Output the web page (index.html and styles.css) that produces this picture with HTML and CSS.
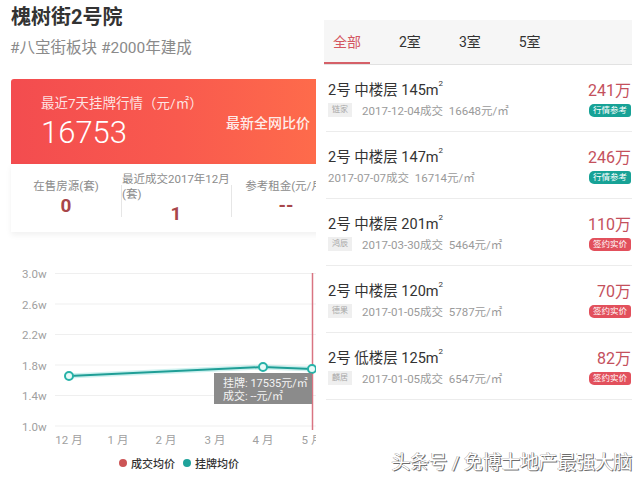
FILE: index.html
```html
<!DOCTYPE html>
<html lang="zh">
<head>
<meta charset="utf-8">
<title>槐树街2号院</title>
<link rel="stylesheet" href="styles.css">
</head>
<body>
<div class="page">
  <section class="left">
    <h1 class="title">槐树街2号院</h1>
    <div class="subtitle">#八宝街板块 #2000年建成</div>
    <div class="hero">
      <div class="hero-main">
        <div class="hero-label">最近7天挂牌行情（元/㎡）</div>
        <div class="hero-value">16753</div>
      </div>
      <div class="hero-link">最新全网比价</div>
    </div>
    <div class="stats">
      <div class="stat">
        <div class="stat-label">在售房源(套)</div>
        <div class="stat-num">0</div>
      </div>
      <div class="stat stat-div">
        <div class="stat-label">最近成交2017年12月(套)</div>
        <div class="stat-num">1</div>
      </div>
      <div class="stat stat-div">
        <div class="stat-label">参考租金(元/月)</div>
        <div class="stat-num">--</div>
      </div>
    </div>
    <svg class="chart" width="305" height="192" viewBox="11 258 305 192">
      <g class="grid">
        <line x1="55" y1="273.5" x2="316" y2="273.5"/>
        <line x1="55" y1="304" x2="316" y2="304"/>
        <line x1="55" y1="334.5" x2="316" y2="334.5"/>
        <line x1="55" y1="365" x2="316" y2="365"/>
        <line x1="55" y1="395.5" x2="316" y2="395.5"/>
        <line x1="55" y1="426" x2="316" y2="426"/>
      </g>
      <g class="ylab">
        <text x="22" y="278">3.0w</text>
        <text x="22" y="308.5">2.6w</text>
        <text x="22" y="339">2.2w</text>
        <text x="22" y="369.5">1.8w</text>
        <text x="22" y="400">1.4w</text>
        <text x="22" y="430.5">1.0w</text>
      </g>
      <g class="xlab">
        <text x="69" y="444">12 月</text>
        <text x="118" y="444">1 月</text>
        <text x="166" y="444">2 月</text>
        <text x="215" y="444">3 月</text>
        <text x="263" y="444">4 月</text>
        <text x="312" y="444">5 月</text>
      </g>
      <line class="cursor" x1="312.5" y1="273" x2="312.5" y2="430"/>
      <polyline class="glow" points="69,376 263,367 312,369"/>
      <polyline class="series" points="69,376 263,367 312,369"/>
      <circle class="pt" cx="69" cy="376" r="4"/>
      <circle class="pt" cx="263" cy="367" r="4"/>
      <circle class="pt" cx="312" cy="369" r="4"/>
      <rect class="tip" x="214" y="373" width="98" height="31"/>
      <text class="tiptext" x="223" y="387">挂牌: 17535元/㎡</text>
      <text class="tiptext" x="223" y="400">成交: --元/㎡</text>
    </svg>
    <div class="legend">
      <span class="dot dot-red"></span><span class="legend-text">成交均价</span>
      <span class="dot dot-teal"></span><span class="legend-text">挂牌均价</span>
    </div>
  </section>

  <section class="right">
    <nav class="tabs">
      <span class="tab active">全部</span>
      <span class="tab">2室</span>
      <span class="tab">3室</span>
      <span class="tab">5室</span>
    </nav>
    <div class="list">
      <div class="row">
        <div class="row-info">
          <div class="row-title">2号 中楼层 145m<sup>2</sup></div>
          <div class="row-meta"><span class="src">链家</span><span>2017-12-04成交&nbsp;&nbsp;16648元/㎡</span></div>
        </div>
        <div class="row-side">
          <div class="price">241万</div>
          <span class="badge badge-teal">行情参考</span>
        </div>
      </div>
      <div class="row">
        <div class="row-info">
          <div class="row-title">2号 中楼层 147m<sup>2</sup></div>
          <div class="row-meta"><span>2017-07-07成交&nbsp;&nbsp;16714元/㎡</span></div>
        </div>
        <div class="row-side">
          <div class="price">246万</div>
          <span class="badge badge-teal">行情参考</span>
        </div>
      </div>
      <div class="row">
        <div class="row-info">
          <div class="row-title">2号 中楼层 201m<sup>2</sup></div>
          <div class="row-meta"><span class="src">鸿辰</span><span>2017-03-30成交&nbsp;&nbsp;5464元/㎡</span></div>
        </div>
        <div class="row-side">
          <div class="price">110万</div>
          <span class="badge badge-red">签约实价</span>
        </div>
      </div>
      <div class="row">
        <div class="row-info">
          <div class="row-title">2号 中楼层 120m<sup>2</sup></div>
          <div class="row-meta"><span class="src">德果</span><span>2017-01-05成交&nbsp;&nbsp;5787元/㎡</span></div>
        </div>
        <div class="row-side">
          <div class="price">70万</div>
          <span class="badge badge-red">签约实价</span>
        </div>
      </div>
      <div class="row">
        <div class="row-info">
          <div class="row-title">2号 低楼层 125m<sup>2</sup></div>
          <div class="row-meta"><span class="src">麟居</span><span>2017-01-05成交&nbsp;&nbsp;6547元/㎡</span></div>
        </div>
        <div class="row-side">
          <div class="price">82万</div>
          <span class="badge badge-red">签约实价</span>
        </div>
      </div>
    </div>
  </section>
  <div class="watermark">头条号 / 免博士地产最强大脑</div>
</div>
</body>
</html>
```

FILE: styles.css
```css
* { box-sizing: border-box; }
html, body {
  margin: 0;
  padding: 0;
  background: #fff;
}
body {
  font-family: Roboto, "Noto Sans CJK SC", sans-serif;
  color: #333;
}
.page {
  position: relative;
  width: 640px;
  height: 480px;
  display: flex;
  overflow: hidden;
}

/* ---------- left panel ---------- */
.left {
  width: 316px;
  margin-right: 4px;
  padding: 5px 0 0 11px;
  overflow: hidden;
}
.title {
  margin: 0;
  font-size: 20px;
  line-height: 24px;
  font-weight: bold;
  color: #333;
}
.subtitle {
  margin-top: 7px;
  margin-left: -1px;
  font-size: 15.5px;
  line-height: 24px;
  color: #8a8a8a;
}
.hero {
  margin-top: 19px;
  width: 305px;
  height: 85px;
  border-radius: 3px 0 0 0;
  background: linear-gradient(90deg, #f34c4f 0%, #f95a4e 55%, #fe6b4b 100%);
  display: flex;
  align-items: center;
  justify-content: space-between;
  padding: 0 6px 0 30px;
  color: #fff;
}
.hero-main {
  display: flex;
  flex-direction: column;
}
.hero-label {
  font-size: 13.5px;
  line-height: 18px;
  color: rgba(255,255,255,0.85);
  margin-top: 2px;
}
.hero-value {
  margin-top: 3px;
  font-size: 31px;
  line-height: 36px;
  font-weight: 300;
  color: #fff;
}
.hero-link {
  font-size: 14px;
  font-weight: 500;
  color: rgba(255,255,255,0.9);
}

.stats {
  width: 330px;
  height: 68px;
  display: flex;
  background: #fff;
  box-shadow: 0 3px 6px rgba(0,0,0,0.06);
}
.stat {
  position: relative;
  width: 110px;
  display: flex;
  flex-direction: column;
  justify-content: center;
  align-items: center;
  text-align: center;
}
.stat-div::before {
  content: "";
  position: absolute;
  left: 0;
  top: 21px;
  bottom: 15px;
  border-left: 1px solid #e6e6e6;
}
.stat-label {
  font-size: 11.5px;
  line-height: 15px;
  color: #8c8c8c;
  padding: 0 1px;
}
.stat-div:nth-child(2) .stat-label {
  text-align: left;
}
.stat-num {
  font-size: 19px;
  line-height: 23px;
  font-weight: bold;
  color: #a8464a;
}

.chart {
  display: block;
  margin-top: 26px;
}
.grid line {
  stroke: #efefef;
  stroke-width: 1;
}
.ylab text, .xlab text {
  font-family: Roboto, "Noto Sans CJK SC", sans-serif;
  font-size: 11.5px;
  fill: #a0a0a0;
}
.xlab text { text-anchor: middle; }
.cursor {
  stroke: #d97482;
  stroke-width: 1.5;
}
.glow {
  fill: none;
  stroke: rgba(60,200,190,0.25);
  stroke-width: 5;
}
.series {
  fill: none;
  stroke: #1f9e96;
  stroke-width: 2;
}
.pt {
  fill: #e9fbf8;
  stroke: #27b2a8;
  stroke-width: 2;
}
.tip {
  fill: #858585;
  fill-opacity: 0.95;
}
.tiptext {
  font-family: Roboto, "Noto Sans CJK SC", sans-serif;
  font-size: 11px;
  fill: #f4f4f4;
}
.legend {
  display: flex;
  align-items: center;
  height: 22px;
  margin-top: 2px;
  padding-left: 108px;
}
.dot {
  width: 8px;
  height: 8px;
  border-radius: 50%;
  margin-right: 4px;
}
.dot-red { background: #cc5455; }
.dot-teal { background: #1fa39b; }
.legend-text {
  font-size: 11px;
  font-weight: 500;
  color: #333;
  margin-right: 8px;
}

/* ---------- right panel ---------- */
.right {
  width: 320px;
  padding-top: 20px;
}
.tabs {
  margin: 0 8px 0 4px;
  height: 45px;
  display: flex;
  gap: 20px;
  background: #f6f6f6;
  border-bottom: 1px solid #e2e2e2;
}
.tab {
  padding: 0 9px;
  line-height: 44px;
  font-size: 14px;
  color: #333;
}
.tab.active {
  color: #d45661;
  box-shadow: inset 0 -2px 0 #d56068;
}
.list {
  margin: 0 8px 0 6px;
}
.row {
  height: 67px;
  padding: 16px 1px 0 2px;
  display: flex;
  justify-content: space-between;
  border-bottom: 1px solid #ececec;
}
.row-title {
  font-size: 14.5px;
  line-height: 20px;
  color: #333;
}
.row-title sup {
  font-size: 8px;
  vertical-align: 9px;
  line-height: 0;
}
.row-meta {
  margin-top: 2px;
  height: 14px;
  display: flex;
  align-items: center;
  font-size: 11.5px;
  color: #9a9a9a;
}
.src {
  display: inline-block;
  width: 24px;
  height: 14px;
  line-height: 14px;
  margin-right: 10px;
  background: #efefef;
  color: #a8a8a8;
  font-size: 8px;
  text-align: center;
}
.row-side {
  display: flex;
  flex-direction: column;
  align-items: flex-end;
}
.price {
  font-size: 16px;
  line-height: 20px;
  color: #c4505c;
}
.badge {
  margin-top: 3px;
  width: 42px;
  height: 13px;
  line-height: 13px;
  border-radius: 5px 3px 3px 5px;
  font-size: 8.5px;
  color: #fff;
  text-align: center;
}
.badge-teal { background: #17a296; }
.badge-red { background: #e2505c; }

.watermark {
  position: absolute;
  right: 8px;
  bottom: 5px;
  font-size: 19px;
  line-height: 24px;
  color: #fff;
  text-shadow: 1px 1px 0 #6e6e6e, -0.5px -0.5px 0 #9a9a9a, 0.5px 0 0 #888;
  letter-spacing: -0.3px;
}
```
